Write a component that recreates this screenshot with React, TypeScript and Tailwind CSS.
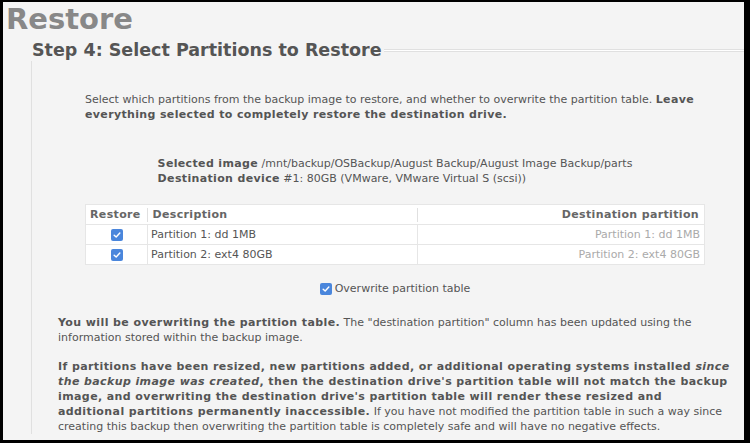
import React from "react";

const font = { fontFamily: '"DejaVu Sans", Verdana, sans-serif' };

function Check() {
  return (
    <span className="inline-flex h-[12px] w-[12px] items-center justify-center rounded-[2px] bg-[#4a86dc]">
      <svg viewBox="0 0 12 12" className="h-[10px] w-[10px]" fill="none">
        <path d="M2.6 6.2 5 8.4 9.4 3.6" stroke="#fff" strokeWidth="1.7" strokeLinecap="round" strokeLinejoin="round" />
      </svg>
    </span>
  );
}

const partitions = [
  { desc: "Partition 1: dd 1MB", dest: "Partition 1: dd 1MB" },
  { desc: "Partition 2: ext4 80GB", dest: "Partition 2: ext4 80GB" },
];

export default function App() {
  return (
    <div
      className="h-[443px] w-[750px] overflow-hidden border-t-2 border-b-[3px] border-l-[3px] border-r-[6px] border-black bg-[#f4f4f4] text-[#555]"
      style={font}
    >
      <h1 className="pl-[3px] text-[29px] font-bold leading-[34px] text-[#888]">Restore</h1>

      <div className="ml-[28px] mt-[3px]">
        {/* legend row */}
        <div className="flex h-[22px] items-center">
          <h2 className="pl-[1px] text-[17.5px] font-bold leading-[22px] text-[#555]">Step 4: Select Partitions to Restore</h2>
          <div className="ml-[2px] h-[3px] flex-1 border-y border-[#e0e0e0] bg-white" />
        </div>

        <div className="border-l border-[#e0e0e0] pl-[26px] pr-[14px] pt-[31px] text-[11px] leading-[15px]">
          <div className="ml-[27px] mr-[25px]">
            <p>
              Select which partitions from the backup image to restore, and whether to overwrite the partition table.{" "}
              <b className="tracking-[0.35px]">Leave everything selected to completely restore the destination drive.</b>
            </p>

            <div className="mt-[34px] flex justify-center">
              <div>
                <div>
                  <b className="tracking-[0.35px]">Selected image</b> /mnt/backup/OSBackup/August Backup/August Image Backup/parts
                </div>
                <div>
                  <b className="tracking-[0.35px]">Destination device</b> #1: 80GB (VMware, VMware Virtual S (scsi))
                </div>
              </div>
            </div>

            <table className="mt-[18px] w-full table-fixed border-collapse border border-[#e6e6e6] bg-white">
              <colgroup>
                <col className="w-[62px]" />
                <col className="w-[270px]" />
                <col />
              </colgroup>
              <thead>
                <tr className="h-[20px] tracking-[0.35px] text-[#666]">
                  <th className="relative px-[4px] text-left font-bold">
                    Restore
                    <span className="absolute right-0 top-[3px] h-[14px] w-px bg-[#e0e0e0]" />
                  </th>
                  <th className="relative px-[5px] text-left font-bold">
                    Description
                    <span className="absolute right-0 top-[3px] h-[14px] w-px bg-[#e0e0e0]" />
                  </th>
                  <th className="px-[5px] text-right font-bold">Destination partition</th>
                </tr>
              </thead>
              <tbody>
                {partitions.map((p) => (
                  <tr key={p.desc} className="h-[20px] border-t border-[#e6e6e6]">
                    <td className="border-r border-[#e6e6e6] text-center align-middle">
                      <span className="flex justify-center">
                        <Check />
                      </span>
                    </td>
                    <td className="border-r border-[#e6e6e6] px-[3px]">{p.desc}</td>
                    <td className="px-[4px] text-right text-[#aaa]">{p.dest}</td>
                  </tr>
                ))}
              </tbody>
            </table>

            <div className="mt-[16px] flex items-center justify-center gap-[3px]">
              <Check />
              <span>Overwrite partition table</span>
            </div>
          </div>

          <p className="mt-[19px]">
            <b className="tracking-[0.4px]">You will be overwriting the partition table.</b> The "destination partition"
            column has been updated using the information stored within the backup image.
          </p>
          <p className="mt-[14px]">
            <b className="tracking-[0.4px]">
              If partitions have been resized, new partitions added, or additional operating systems installed{" "}
              <i>since the backup image was created</i>, then the destination drive's partition table will not match the
              backup image, and overwriting the destination drive's partition table will render these resized and additional
              partitions permanently inaccessible.
            </b>{" "}
            If you have not modified the partition table in such a way since creating this backup then overwriting the
            partition table is completely safe and will have no negative effects.
          </p>
        </div>
      </div>
    </div>
  );
}
